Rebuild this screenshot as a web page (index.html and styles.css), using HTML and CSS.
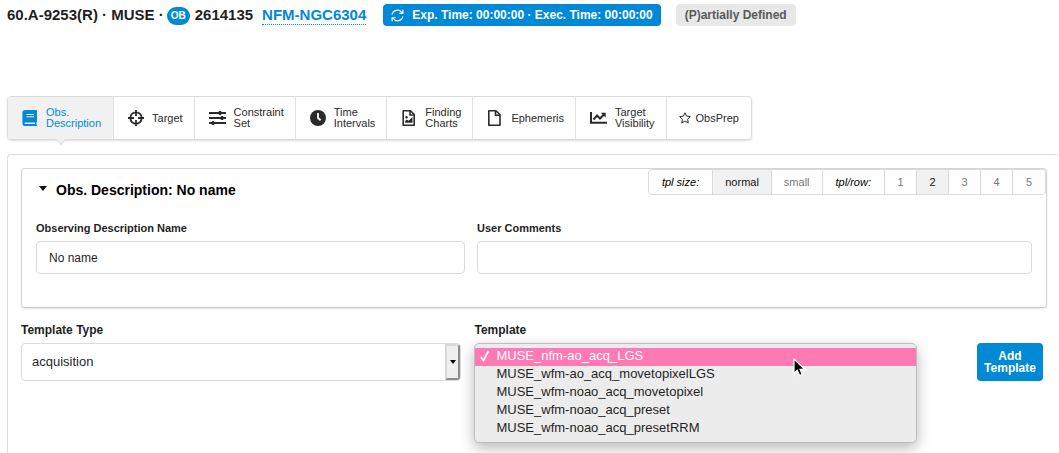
FILE: index.html
```html
<!DOCTYPE html>
<html lang="en">
<head>
<meta charset="utf-8">
<meta name="viewport" content="width=device-width, initial-scale=1">
<title>Observing Description</title>
<link rel="stylesheet" href="styles.css">
</head>
<body>
<header class="header">
  <div class="crumbs">
    <span>60.A-9253(R) · MUSE ·</span>
    <span class="ob">OB</span>
    <span class="ob-id">2614135</span>
    <a class="ob-name" href="#name">NFM-NGC6304</a>
  </div>
  <button class="times" type="button">
    <svg width="13" height="13" viewBox="0 0 14 14" fill="none" stroke="currentColor" stroke-width="1.3" aria-hidden="true"><path d="M1.2 6A5.8 5.8 0 0 1 11.8 4M12.8 .8v3.8H9M12.8 8A5.8 5.8 0 0 1 2.2 10M1.2 13.2V9.4H5"/></svg>
    <span>Exp. Time: 00:00:00 · Exec. Time: 00:00:00</span>
  </button>
  <span class="status">(P)artially Defined</span>
</header>

<nav class="tabs">
  <a class="tab active" href="#description" aria-current="page">
    <svg width="16" height="16" viewBox="0 0 16 16" aria-hidden="true"><path fill="currentColor" d="M3.2 0H14.2Q15 0 15 .8V11.600Q15 12.200 14.400 12.400V14.600Q15 14.800 15 15.400Q15 16 14.400 16H3.200Q.4 16 .4 13.200V2.800Q.4 0 3.200 0z"/><path stroke="#f1f1f1" fill="none" d="M4.500 4.500h7.500M4.500 6.800h7.500"/><path fill="#f1f1f1" d="M3.300 12.400H13V14H3.300Q2.500 14 2.500 13.200T3.300 12.400z"/></svg>
    <span>Obs.<br>Description</span>
  </a>
  <a class="tab" href="#target">
    <svg width="16" height="16" viewBox="0 0 16 16" fill="none" stroke="currentColor" stroke-width="1.800" aria-hidden="true"><circle cx="8" cy="8" r="5.700"/><path d="M8 0v6M8 10v6M0 8h6M10 8h6"/></svg>
    <span>Target</span>
  </a>
  <a class="tab" href="#constraints">
    <svg width="17" height="16" viewBox="0 0 17 16" stroke="currentColor" fill="none" aria-hidden="true"><path stroke-width="1.800" d="M0 3h17M0 8h17M0 13h17"/><path stroke-width="2.400" d="M11 1v4M13 6v4M4 11v4"/></svg>
    <span>Constraint<br>Set</span>
  </a>
  <a class="tab" href="#intervals">
    <svg width="16" height="16" viewBox="0 0 16 16" aria-hidden="true"><circle cx="8" cy="8" r="8" fill="currentColor"/><path d="M8 3v5l2.600 2.200" fill="none" stroke="#fff" stroke-width="1.800"/></svg>
    <span>Time<br>Intervals</span>
  </a>
  <a class="tab" href="#charts">
    <svg width="16" height="16" viewBox="0 0 16 16" fill="none" stroke="currentColor" stroke-width="1.600" aria-hidden="true"><path stroke-linejoin="round" d="M2.200 .8H9.500L13.200 4.500V15.200H2.200z"/><path d="M9 .8V5h4.200"/><circle cx="5.500" cy="7.300" r="1.200" fill="currentColor" stroke="none"/><path fill="currentColor" stroke="none" d="M4.200 12.800v-2L6 9.500l1.500 1.300L11.500 7v5.800z"/></svg>
    <span>Finding<br>Charts</span>
  </a>
  <a class="tab" href="#ephemeris">
    <svg width="16" height="16" viewBox="0 0 16 16" fill="none" stroke="currentColor" stroke-width="1.600" aria-hidden="true"><path stroke-linejoin="round" d="M1.800 .8H9L13 4.800V15.200H1.800z"/><path d="M8.500 .8V5.200H13"/></svg>
    <span>Ephemeris</span>
  </a>
  <a class="tab" href="#visibility">
    <svg width="17" height="16" viewBox="0 0 17 16" aria-hidden="true"><path d="M1 2v10.800h16" fill="none" stroke="currentColor" stroke-width="2"/><path d="M3.500 9.500L7 5.500l3 3L14 4.500" fill="none" stroke="currentColor" stroke-width="2"/><path d="M10.800 2.700H15.700V7.600z" fill="currentColor"/></svg>
    <span>Target<br>Visibility</span>
  </a>
  <a class="tab slim" href="#obsprep">
    <svg width="12" height="12" viewBox="0 0 12 12" fill="none" stroke="currentColor" stroke-linejoin="round" aria-hidden="true"><path d="M6 .8L7.600 4.100L11.300 4.600L8.600 7.200L9.300 10.900L6 9.100L2.700 10.900L3.400 7.200L.7 4.600L4.400 4.100z"/></svg>
    <span>ObsPrep</span>
  </a>
</nav>

<main class="panel">
  <section class="card">
    <div class="card-head">
      <button class="title" type="button" aria-expanded="true"><span class="caret"></span>Obs. Description: No name</button>
      <div class="options">
        <span class="opt-label">tpl size:</span>
        <button class="opt on" type="button">normal</button>
        <button class="opt" type="button">small</button>
        <span class="opt-label">tpl/row:</span>
        <button class="opt num" type="button">1</button>
        <button class="opt num on" type="button">2</button>
        <button class="opt num" type="button">3</button>
        <button class="opt num" type="button">4</button>
        <button class="opt num" type="button">5</button>
      </div>
    </div>
    <div class="fields">
      <div class="field">
        <label for="name">Observing Description Name</label>
        <input id="name" type="text" value="No name">
      </div>
      <div class="field">
        <label for="comments">User Comments</label>
        <input id="comments" type="text">
      </div>
    </div>
  </section>

  <form class="picker">
    <div class="pick">
      <label for="type">Template Type</label>
      <div class="combo">
        <select id="type"><option>acquisition</option></select>
        <span class="arrow"></span>
      </div>
    </div>
    <div class="pick">
      <label for="template">Template</label>
      <div class="menu">
        <select id="template" size="5">
          <option selected>MUSE_nfm-ao_acq_LGS</option>
          <option>MUSE_wfm-ao_acq_movetopixelLGS</option>
          <option>MUSE_wfm-noao_acq_movetopixel</option>
          <option>MUSE_wfm-noao_acq_preset</option>
          <option>MUSE_wfm-noao_acq_presetRRM</option>
        </select>
        <svg class="check" width="10" height="12" viewBox="0 0 10 12" fill="none" stroke="#fff" stroke-width="1.800" aria-hidden="true"><path d="M1 7l2.500 3.500L8.500 1"/></svg>
        <svg class="cursor" width="13" height="19" viewBox="0 0 13 19" aria-hidden="true"><path d="M1 1V15.500L4.300 12.300L6.600 17.600L9.300 16.400L7 11.300H11.600z" stroke="#fff" stroke-width="1.200"/></svg>
      </div>
    </div>
    <button class="add" type="button">Add<br>Template</button>
  </form>
</main>
</body>
</html>
```

FILE: styles.css
```css
* { box-sizing: border-box; }

body {
  margin: 0;
  min-height: 100vh;
  display: flex;
  flex-direction: column;
  padding: 4px 0 0 7px;
  overflow: hidden;
  background: #fff;
  color: #1f1f1f;
  font: 13px/16px "Liberation Sans", Arial, sans-serif;
}

button, input, select { font: inherit; color: inherit; margin: 0; }
button { cursor: pointer; }
svg { display: block; flex: none; }

.header { display: flex; align-items: center; height: 22px; }
.crumbs { display: flex; align-items: center; font-size: 15px; font-weight: bold; margin-right: 17px; }
.ob {
  margin: 2px 5px 0 3px;
  padding: 0 4px;
  border-radius: 9px;
  background: #0089d6;
  color: #fff;
  font-size: 10px;
  line-height: 18px;
}
.ob-id { margin-right: 9px; }
.ob-name { color: #0089d6; text-decoration: none; border-bottom: 1px dotted #0089d6; line-height: 18px; padding-top: 1px; }
.times {
  display: flex;
  align-items: center;
  gap: 8px;
  height: 22px;
  padding: 0 8px;
  border: 0;
  border-radius: 4px;
  background: #0089d6;
  color: #fff;
  font-size: 12px;
  font-weight: bold;
}
.status {
  margin-left: 15px;
  padding: 0 9px;
  border-radius: 4px;
  background: #e8e8e8;
  color: #595959;
  font-size: 12px;
  font-weight: bold;
  line-height: 22px;
}

.tabs {
  display: flex;
  align-self: flex-start;
  height: 44px;
  margin-top: 70px;
  border: 1px solid #dbdbdc;
  border-radius: 4px;
  box-shadow: 0 1px 2px rgba(34, 36, 38, .15);
}
.tab {
  position: relative;
  display: flex;
  align-items: center;
  gap: 8px;
  padding: 0 11px 0 14px;
  border-right: 1px solid #e2e2e3;
  color: #2b2b2b;
  font-size: 11px;
  line-height: 11px;
  text-decoration: none;
}
.tab:last-child { border-right: 0; }
.slim { gap: 5px; padding: 0 12px; }
.active { padding-right: 12px; background: #f1f1f1; color: #0089d6; border-radius: 3px 0 0 3px; }
.active::after {
  content: "";
  position: absolute;
  left: 50%;
  bottom: -4px;
  width: 7px;
  height: 7px;
  border: solid #dbdbdc;
  border-width: 0 1px 1px 0;
  background: #f1f1f1;
  transform: translateX(-50%) rotate(45deg);
}

.panel {
  flex: 1;
  margin-top: 14px;
  padding: 13px 12px 0 13px;
  border: 1px solid #dcdcdd;
  border-width: 1px 0 0 1px;
  border-radius: 4px 4px 0 0;
}
.card {
  padding-bottom: 33px;
  border: 1px solid #d4d4d5;
  border-bottom-color: #c9c9ca;
  border-radius: 4px;
  box-shadow: 0 1px 2px rgba(34, 36, 38, .12);
}
.card-head { display: flex; justify-content: space-between; align-items: flex-start; }
.title {
  display: flex;
  align-items: center;
  gap: 9px;
  margin-top: 13px;
  padding: 0 0 0 17px;
  border: 0;
  background: none;
  color: #000;
  font-size: 14px;
  font-weight: bold;
}
.caret { border: 4px solid transparent; border-top: 5px solid #111; border-bottom: 0; margin-bottom: 4px; }
.options {
  display: flex;
  height: 26px;
  border: 1px solid #dbdbdc;
  border-radius: 4px;
  font-size: 11px;
  line-height: 24px;
}
.opt, .opt-label { padding: 0 12px; border: 0; border-right: 1px solid #dbdbdc; background: none; color: #777; }
.opt-label { padding: 0 13px; color: #000; font-style: italic; }
.num { width: 32px; padding: 0; }
.on { background: #f1f1f1; color: #111; }
.opt:last-child { border-right: 0; }

.fields { display: grid; grid-template-columns: 429fr 555fr; gap: 12px; padding: 22px 14px 0; }
label { display: block; font-size: 11px; font-weight: bold; }
.field input {
  display: block;
  width: 100%;
  height: 33px;
  margin-top: 5px;
  padding: 0 12px;
  border: 1px solid #dbdbdc;
  border-radius: 4px;
  background: #fff;
  font-size: 12px;
}

.picker { display: grid; grid-template-columns: 440fr 442fr 66px; column-gap: 13px; margin-top: 14px; padding-right: 4px; }
.picker label { font-size: 12px; }
.combo { position: relative; margin-top: 5px; }
.combo select {
  display: block;
  width: 100%;
  height: 38px;
  padding: 0 10px;
  border: 1px solid #dbdbdc;
  border-radius: 4px;
  background: #fff;
  appearance: none;
}
.arrow {
  position: absolute;
  top: 1px;
  right: 1px;
  bottom: 1px;
  width: 15px;
  display: grid;
  place-items: center;
  border: 2px solid;
  border-color: #d8d8d8 #8c8c8c #8c8c8c #d8d8d8;
  border-radius: 0 3px 3px 0;
  background: #efefef;
  pointer-events: none;
}
.arrow::before { content: ""; border: 3px solid transparent; border-top: 4px solid #000; border-bottom: 0; }

.menu { position: relative; margin-top: 5px; }
.menu select {
  display: block;
  width: 100%;
  height: 100px;
  padding: 4px 0;
  border: 1px solid #bdbdbd;
  border-radius: 5px;
  background: #ececec;
  box-shadow: 0 5px 14px rgba(0, 0, 0, .28);
  overflow: hidden;
  outline: 0;
}
.menu option { min-height: 18px; padding: 0 21px; line-height: 18px; color: #1f1f1f; }
.menu option:checked { background: linear-gradient(#ff7ab2, #ff7ab2); color: #fff; }
.check { position: absolute; left: 6px; top: 7px; }
.cursor { position: absolute; left: 72%; top: 15px; }

.add {
  align-self: start;
  height: 38px;
  margin: 21px 0 0 47px;
  width: 66px;
  padding: 0;
  border: 0;
  border-radius: 4px;
  background: #0089d6;
  color: #fff;
  font-size: 12px;
  font-weight: bold;
  line-height: 12px;
}
.picker { grid-template-columns: 440fr 442fr 113px; }
```
